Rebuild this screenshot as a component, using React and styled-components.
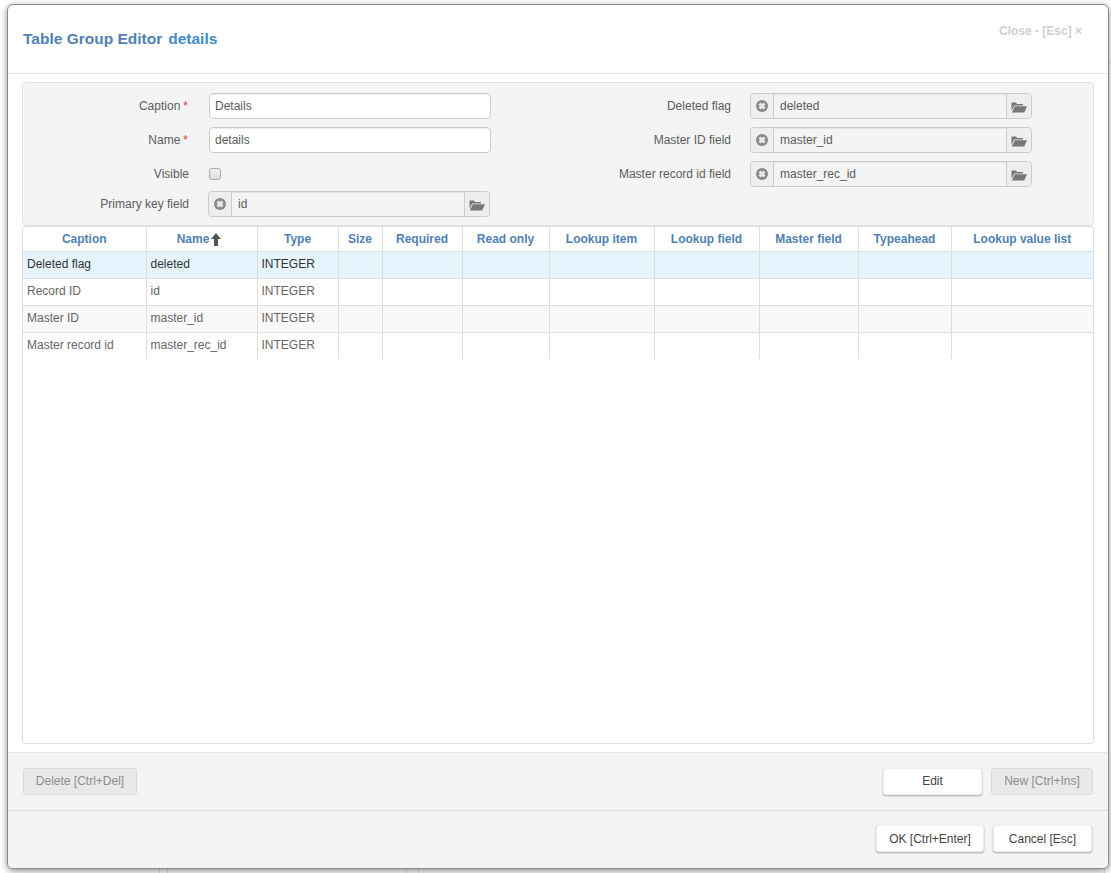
import React from 'react'
import styled, { createGlobalStyle } from 'styled-components'

const GlobalStyle = createGlobalStyle`
  html, body {
    margin: 0;
    padding: 0;
    background: #fff;
    font-family: "Liberation Sans", Arial, sans-serif;
    font-size: 12px;
    color: #5c5c5c;
  }
  * {
    box-sizing: border-box;
  }
`
// the faint lines are the page that sits behind the dialog
const Page = styled.div`
  width: 1111px;
  height: 873px;
  padding: 4px 2px 4px 7px;
  overflow: hidden;
  background-color: #fff;
  background-image:
    linear-gradient(#e2e2e2, #e2e2e2),
    linear-gradient(#e2e2e2, #e2e2e2),
    linear-gradient(#e2e2e2, #e2e2e2),
    linear-gradient(#e2e2e2, #e2e2e2),
    linear-gradient(#e2e2e2, #e2e2e2),
    linear-gradient(#e2e2e2, #e2e2e2);
  background-size: 1px 23px, 1px 23px, 1px 23px, 1px 23px, 1px 23px, 6px 1px;
  background-position: 159px 850px, 167px 850px, 406px 850px, 418px 850px, 1104px 850px, 1105px 62px;
  background-repeat: no-repeat;
`
const Modal = styled.div`
  width: 1102px;
  height: 865px;
  display: flex;
  flex-direction: column;
  background: #fff;
  border: 1px solid #8a8a8a;
  border-radius: 6px;
  box-shadow: 0 2px 7px rgba(0, 0, 0, 0.45);
  overflow: hidden;
`
const Header = styled.div`
  height: 69px;
  flex: none;
  display: flex;
  justify-content: space-between;
  padding: 0 26px 0 15px;
  border-bottom: 1px solid #e5e5e5;
`
const Title = styled.h3`
  margin: 25px 0 0;
  display: flex;
  gap: 6px;
  font-size: 15.5px;
  line-height: 17px;
  font-weight: 700;
  color: #4f81b3;
  span:last-child {
    color: #428bca;
  }
`
const CloseLink = styled.div`
  margin-top: 18px;
  font-size: 12px;
  line-height: 17px;
  font-weight: 700;
  color: #cfcfcf;
`
const Body = styled.div`
  flex: 1;
  min-height: 0;
  display: flex;
  flex-direction: column;
  padding: 8px 14px 8px 14px;
`
const FormPanel = styled.div`
  height: 144px;
  flex: none;
  display: grid;
  grid-template-columns: 557px 1fr;
  padding: 10px 0 0;
  background: #f4f4f4;
  border: 1px solid #e3e3e3;
  border-radius: 4px;
`
const FormColumn = styled.div`
  display: flex;
  flex-direction: column;
  gap: 8px;
`
const FieldRow = styled.div`
  height: 26px;
  display: flex;
  align-items: center;
  gap: 19px;
  margin-top: ${(p) => p.$offset || 0}px;
`
const Label = styled.label`
  width: ${(p) => p.$width}px;
  flex: none;
  text-align: right;
  white-space: nowrap;
`
const Required = styled.span`
  color: #e9322d;
  margin: 0 1px 0 3px;
`
const TextInput = styled.div`
  width: 282px;
  height: 26px;
  margin-left: 1px;
  padding: 0 5px;
  line-height: 24px;
  background: #fff;
  border: 1px solid #ccc;
  border-radius: 4px;
  box-shadow: inset 0 1px 1px rgba(0, 0, 0, 0.075);
`
const CheckBox = styled.span`
  width: 12px;
  height: 12px;
  margin-left: 1px;
  border: 1px solid #aaa;
  border-radius: 3px;
  background: linear-gradient(#f2f2f2, #e0e0e0);
`
const LookupGroup = styled.div`
  width: 282px;
  height: 26px;
  display: flex;
  border: 1px solid #ccc;
  border-radius: 4px;
  background: #eee;
  overflow: hidden;
`
const LookupAddon = styled.span`
  width: ${(p) => p.$width}px;
  flex: none;
  display: flex;
  align-items: center;
  justify-content: center;
  padding-top: ${(p) => p.$drop || 0}px;
  background: #eee;
`
const LookupValue = styled.div`
  flex: 1;
  padding: 0 6px;
  line-height: 24px;
  background: #f4f4f4;
  border-left: 1px solid #ccc;
  border-right: 1px solid #ccc;
  box-shadow: inset 0 1px 1px rgba(0, 0, 0, 0.075);
`
const GridPanel = styled.div`
  flex: 1;
  min-height: 0;
  background: #fff;
  border: 1px solid #ddd;
  border-radius: 4px;
  overflow: hidden;
`
const Table = styled.table`
  width: 1070px;
  table-layout: fixed;
  border-collapse: collapse;
`
const HeadCell = styled.th`
  height: 24px;
  padding: 0;
  font-size: 12px;
  font-weight: 700;
  color: #4f81b3;
  text-align: center;
  border-left: 1px solid #ddd;
  border-bottom: 1px solid #ddd;
  &:first-child {
    border-left: 0;
  }
`
const Row = styled.tr`
  background: ${(p) => (p.$selected ? '#e6f4fd' : p.$odd ? '#f9f9f9' : '#fff')};
`
const Cell = styled.td`
  height: 27px;
  padding: 0 4px 2px;
  color: ${(p) => (p.$selected ? '#333' : '#666')};
  border-left: 1px solid #ddd;
  border-bottom: 1px solid #ddd;
  white-space: nowrap;
  &:first-child {
    border-left: 0;
  }
  tr:last-child & {
    border-bottom: 0;
  }
`
const SortArrow = styled.svg`
  width: 10px;
  height: 13px;
  margin: 0 5px 0 2px;
  vertical-align: -3px;
`
const ActionBar = styled.div`
  height: 58px;
  flex: none;
  display: flex;
  align-items: center;
  justify-content: space-between;
  padding: 0 15px 1px 15px;
  background: #f4f4f4;
  border-top: 1px solid #e5e5e5;
`
const ButtonGroup = styled.div`
  display: flex;
  gap: 9px;
`
const Button = styled.button`
  width: ${(p) => p.$width}px;
  height: 27px;
  padding: 0;
  font-family: inherit;
  font-size: 12px;
  color: ${(p) => (p.disabled ? '#8c8c8c' : '#444')};
  background: ${(p) => (p.disabled ? '#e9e9e9' : '#fff')};
  border: 1px solid ${(p) => (p.disabled ? '#dadada' : '#eee')};
  border-radius: 3px;
  box-shadow: ${(p) => (p.disabled ? 'none' : '0 1px 2px rgba(0, 0, 0, 0.3)')};
`
const Footer = styled.div`
  height: 58px;
  flex: none;
  display: flex;
  justify-content: flex-end;
  gap: 9px;
  padding: 14px 16px 0 0;
  background: #f4f4f4;
  border-top: 1px solid #dedede;
`

const ClearIcon = () => (
  <svg width="12" height="12" viewBox="0 0 12 12">
    <circle cx="6" cy="6" r="6" fill="#888" />
    <path d="M3.5 3.5l5 5M8.5 3.5l-5 5" stroke="#e8e8e8" strokeWidth="3" />
  </svg>
)

const FolderIcon = () => (
  <svg width="16" height="12" viewBox="0 0 16 12">
    <path d="M0.5 10V1.5H5L6 3h6v1.5H3.2L0.5 10z" fill="#777" />
    <path d="M3.8 5.3H16L13.2 11.5H0.8z" fill="#777" />
  </svg>
)

const Lookup = ({ value }) => (
  <LookupGroup>
    <LookupAddon $width={22}>
      <ClearIcon />
    </LookupAddon>
    <LookupValue>{value}</LookupValue>
    <LookupAddon $width={24} $drop={2}>
      <FolderIcon />
    </LookupAddon>
  </LookupGroup>
)

const columns = [
  { title: 'Caption', width: 123 },
  { title: 'Name', width: 111, sorted: true },
  { title: 'Type', width: 81 },
  { title: 'Size', width: 44 },
  { title: 'Required', width: 80 },
  { title: 'Read only', width: 87 },
  { title: 'Lookup item', width: 105 },
  { title: 'Lookup field', width: 105 },
  { title: 'Master field', width: 99 },
  { title: 'Typeahead', width: 93 },
  { title: 'Lookup value list', width: 142 },
]

const rows = [
  ['Deleted flag', 'deleted', 'INTEGER'],
  ['Record ID', 'id', 'INTEGER'],
  ['Master ID', 'master_id', 'INTEGER'],
  ['Master record id', 'master_rec_id', 'INTEGER'],
]

const App = () => (
  <>
    <GlobalStyle />
    <Page>
      <Modal>
        <Header>
          <Title>
            <span>Table Group Editor</span>
            <span>details</span>
          </Title>
          <CloseLink>Close - [Esc] ×</CloseLink>
        </Header>
        <Body>
          <FormPanel>
            <FormColumn>
              <FieldRow>
                <Label $width={166}>
                  Caption<Required>*</Required>
                </Label>
                <TextInput>Details</TextInput>
              </FieldRow>
              <FieldRow>
                <Label $width={166}>
                  Name<Required>*</Required>
                </Label>
                <TextInput>details</TextInput>
              </FieldRow>
              <FieldRow>
                <Label $width={166}>Visible</Label>
                <CheckBox />
              </FieldRow>
              <FieldRow $offset={-4}>
                <Label $width={166}>Primary key field</Label>
                <Lookup value="id" />
              </FieldRow>
            </FormColumn>
            <FormColumn>
              <FieldRow>
                <Label $width={151}>Deleted flag</Label>
                <Lookup value="deleted" />
              </FieldRow>
              <FieldRow>
                <Label $width={151}>Master ID field</Label>
                <Lookup value="master_id" />
              </FieldRow>
              <FieldRow>
                <Label $width={151}>Master record id field</Label>
                <Lookup value="master_rec_id" />
              </FieldRow>
            </FormColumn>
          </FormPanel>
          <GridPanel>
            <Table>
              <colgroup>
                {columns.map((c) => (
                  <col key={c.title} width={c.width} />
                ))}
              </colgroup>
              <thead>
                <tr>
                  {columns.map((c) => (
                    <HeadCell key={c.title}>
                      {c.title}
                      {c.sorted && (
                        <SortArrow viewBox="0 0 10 13">
                          <path d="M5 0l5 6H7v7H3V6H0z" fill="#555" />
                        </SortArrow>
                      )}
                    </HeadCell>
                  ))}
                </tr>
              </thead>
              <tbody>
                {rows.map((r, i) => (
                  <Row key={r[1]} $selected={i === 0} $odd={i === 2}>
                    {columns.map((c, j) => (
                      <Cell key={c.title} $selected={i === 0}>
                        {r[j]}
                      </Cell>
                    ))}
                  </Row>
                ))}
              </tbody>
            </Table>
          </GridPanel>
        </Body>
        <ActionBar>
          <Button disabled $width={114}>
            Delete [Ctrl+Del]
          </Button>
          <ButtonGroup>
            <Button $width={99}>Edit</Button>
            <Button disabled $width={102}>
              New [Ctrl+Ins]
            </Button>
          </ButtonGroup>
        </ActionBar>
        <Footer>
          <Button $width={108}>OK [Ctrl+Enter]</Button>
          <Button $width={99}>Cancel [Esc]</Button>
        </Footer>
      </Modal>
    </Page>
  </>
)

export default App
